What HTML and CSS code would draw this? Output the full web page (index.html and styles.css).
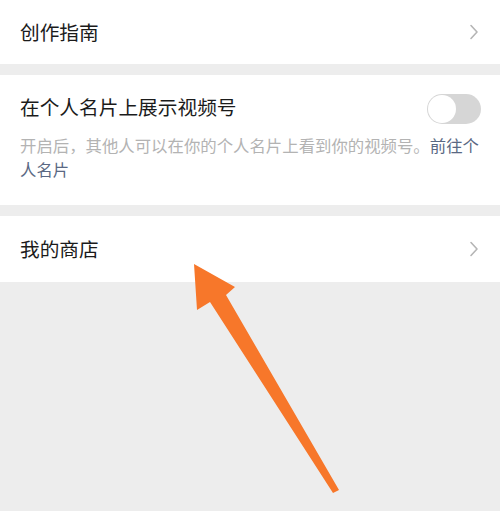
FILE: index.html
```html
<!DOCTYPE html>
<html lang="zh-CN">
<head>
<meta charset="utf-8">
<link rel="stylesheet" href="styles.css">
</head>
<body>
<div class="page">
  <div class="cell row">
    <span class="label">创作指南</span>
    <svg class="chev" viewBox="0 0 10 16" width="10" height="16"><path d="M2 1.5 L8 8 L2 14.5" fill="none" stroke="#b5b5b5" stroke-width="1.6" stroke-linecap="round" stroke-linejoin="round"/></svg>
  </div>
  <div class="cell block">
    <div class="title-row">
      <span class="label">在个人名片上展示视频号</span>
      <span class="switch"><span class="knob"></span></span>
    </div>
    <p class="desc">开启后，其他人可以在你的个人名片上看到你的视频号。<span class="link">前往个人名片</span></p>
  </div>
  <div class="cell row shop">
    <span class="label">我的商店</span>
    <svg class="chev" viewBox="0 0 10 16" width="10" height="16"><path d="M2 1.5 L8 8 L2 14.5" fill="none" stroke="#b5b5b5" stroke-width="1.6" stroke-linecap="round" stroke-linejoin="round"/></svg>
  </div>
  <svg class="arrow" viewBox="0 0 500 511" width="500" height="511">
    <polygon points="194,264 235,287 226,295 339,490 333,493 210,302 197,310" fill="#f7772a"/>
  </svg>
</div>
</body>
</html>
```
FILE: styles.css
```css
html, body {
  margin: 0;
  padding: 0;
  background: #ededed;
}
.page {
  position: relative;
  width: 500px;
  height: 511px;
  overflow: hidden;
  font-family: "Noto Sans CJK SC", "Noto Sans", sans-serif;
  background: #ededed;
}
.cell {
  background: #fff;
  padding: 0 20px;
}
.cell + .cell {
  margin-top: 11px;
}
.row {
  height: 64px;
  display: flex;
  align-items: center;
  justify-content: space-between;
}
.shop {
  height: 66px;
}
.label {
  font-size: 19.7px;
  color: #1b1b1b;
  line-height: 1;
}
.chev {
  margin-right: 1px;
}
.block {
  height: 130px;
  box-sizing: border-box;
  padding-top: 19px;
}
.title-row {
  height: 30px;
  display: flex;
  align-items: center;
  justify-content: space-between;
}
.title-row .label {
  position: relative;
  top: -2px;
}
.switch {
  width: 54px;
  height: 30px;
  border-radius: 15px;
  background: #d6d6d6;
  box-sizing: border-box;
  padding: 1px;
  margin-right: -1px;
  display: flex;
  align-items: center;
}
.knob {
  width: 28px;
  height: 28px;
  border-radius: 50%;
  background: #fff;
}
.desc {
  margin: 9px -4px 0 0;
  font-size: 16.4px;
  line-height: 24px;
  color: #b3b3b3;
}
.link {
  color: #5a6883;
}
.arrow {
  position: absolute;
  left: 0;
  top: 0;
}
```
